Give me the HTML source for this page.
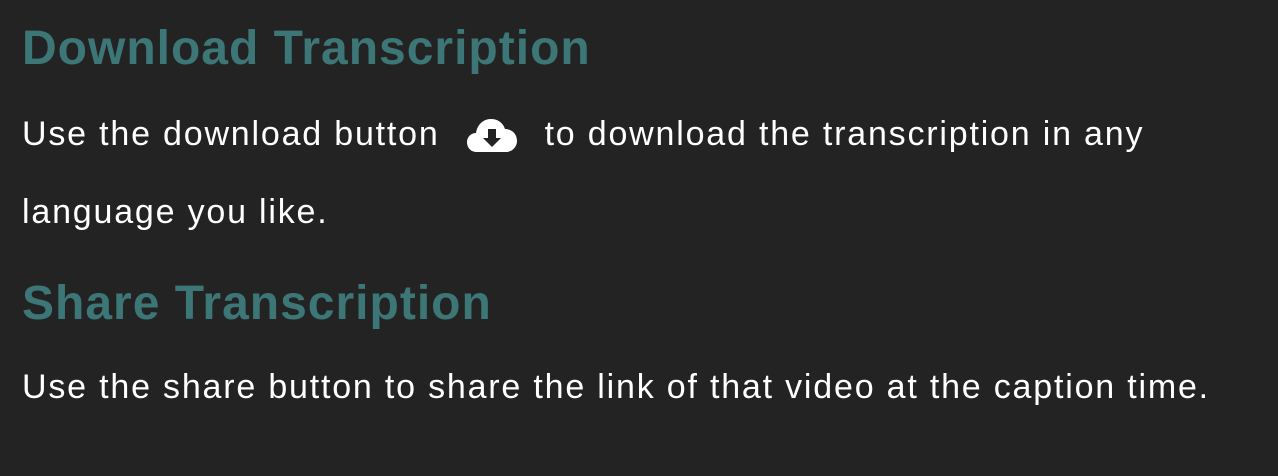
<!DOCTYPE html>
<html><head><meta charset="utf-8"><style>
html,body{margin:0;padding:0;background:#232323;width:1278px;height:476px;overflow:hidden}
body{font-family:"Liberation Sans",sans-serif;color:#fff;position:relative}
.h{position:absolute;left:22px;font-weight:bold;font-size:48px;color:#3d7676;white-space:nowrap;letter-spacing:1px}
.t{position:absolute;left:22px;font-size:34px;white-space:nowrap;letter-spacing:1.8px}
</style></head><body>
<div class="h" style="top:21px">Download Transcription</div>
<div class="t" style="top:115px">Use the download button<svg width="50" height="34" viewBox="0 0 50 34" style="vertical-align:-8px;margin:0 28px 0 27px"><path d="M10 33 C3 33 0 28 0 23 C0 18 4 14 9 14 C10 6 16 0 24 0 C31 0 36 4 38 10 C45 10 50 15 50 22 C50 28 45 33 39 33 Z" fill="#fff"/><path d="M21 10 H29 V19 H34 L25 28 L16 19 H21 Z" fill="#232323"/></svg>to download the transcription in any</div>
<div class="t" style="top:193px">language you like.</div>
<div class="h" style="top:276px">Share Transcription</div>
<div class="t" style="top:368px">Use the share button to share the link of that video at the caption time.</div>
</body></html>
